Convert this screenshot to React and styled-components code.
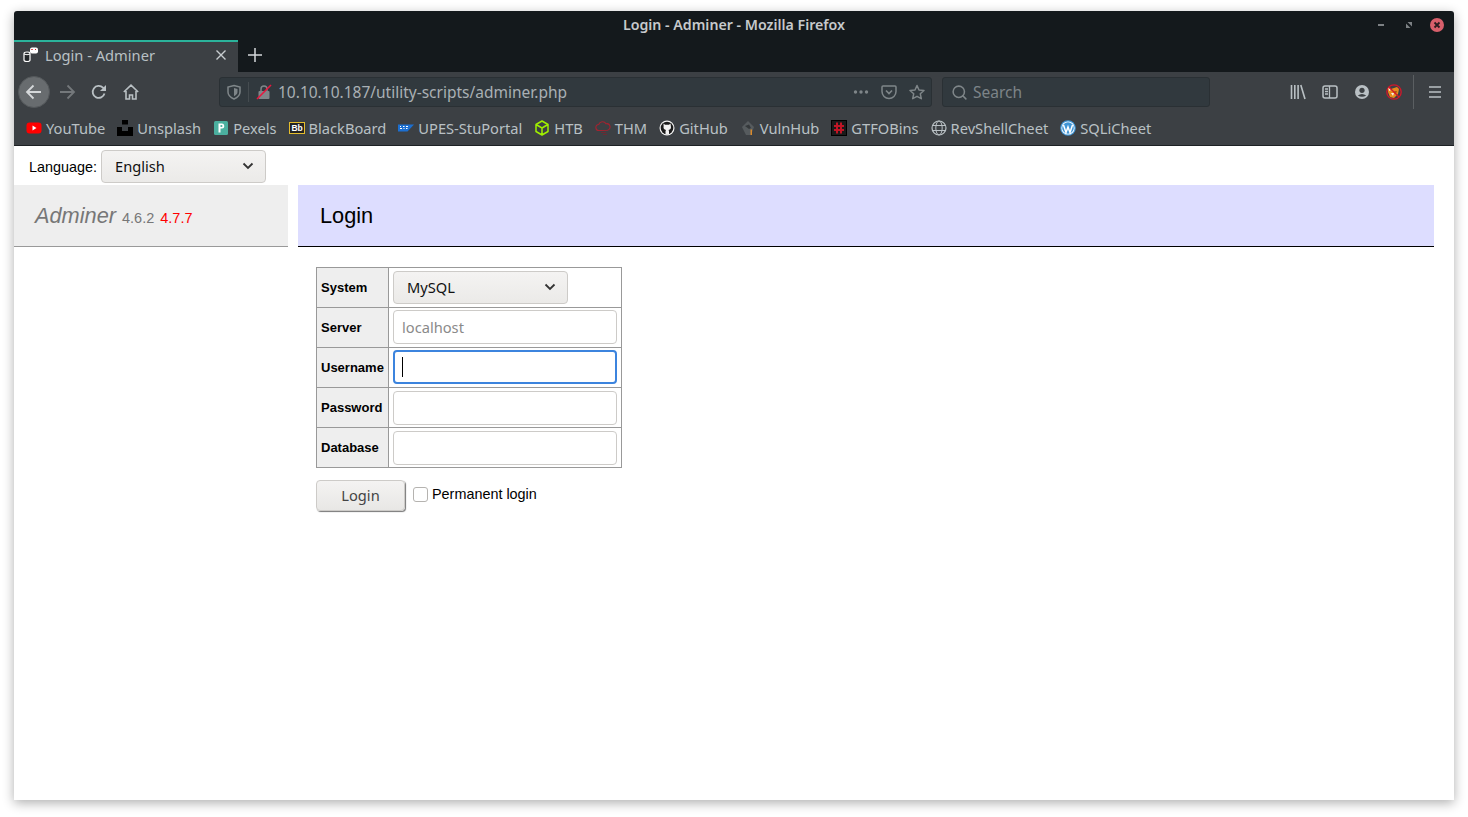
import React from "react";
import styled, { createGlobalStyle } from "styled-components";
import { Search } from "lucide-react";

const GlobalStyle = createGlobalStyle`
  html, body {
    margin: 0;
    padding: 0;
    background: #fff;
  }
`;

const Desktop = styled.div`
  width: 1468px;
  height: 817px;
  box-sizing: border-box;
  padding: 11px 14px 17px;
  overflow: hidden;
`;

const Window = styled.div`
  height: 789px;
  display: flex;
  flex-direction: column;
  background: #fff;
  border-radius: 3px 3px 0 0;
  box-shadow: 0 3px 12px rgba(0, 0, 0, 0.32);
  font-family: "Noto Sans", sans-serif;
`;

const TitleBar = styled.div`
  height: 29px;
  flex: none;
  box-sizing: border-box;
  padding: 0 0 2px;
  position: relative;
  display: flex;
  align-items: center;
  justify-content: center;
  background: #14191c;
  border-radius: 3px 3px 0 0;
  color: #c7cacc;
  font-size: 14.2px;
  font-weight: 600;
`;

const WindowButtons = styled.div`
  position: absolute;
  right: 10px;
  top: 7px;
  display: flex;
  align-items: center;
  gap: 18px;
`;

const TabStrip = styled.div`
  height: 32px;
  flex: none;
  display: flex;
  background: #14191c;
`;

const Tab = styled.div`
  width: 224px;
  box-sizing: border-box;
  display: flex;
  align-items: center;
  padding: 0 11px 4px 9px;
  gap: 6px;
  background: #3c4044;
  border-top: 2px solid #2bb39b;
  color: #b9c0c4;
  font-size: 14.67px;
`;

const TabTitle = styled.span`
  flex: 1;
`;

const NewTab = styled.div`
  width: 34px;
  padding-bottom: 2px;
  display: flex;
  align-items: center;
  justify-content: center;
`;

const NavBar = styled.div`
  height: 40px;
  flex: none;
  box-sizing: border-box;
  display: flex;
  align-items: center;
  padding: 0 3px 0 4px;
  background: #3c4044;
`;

const BackButton = styled.div`
  width: 32px;
  height: 32px;
  margin-right: 1px;
  box-sizing: border-box;
  border-radius: 50%;
  display: flex;
  align-items: center;
  justify-content: center;
  background: #686c6f;
  border: 1px solid #54585b;
`;

const NavIcon = styled.div`
  width: 32px;
  height: 32px;
  display: flex;
  align-items: center;
  justify-content: center;
`;

const UrlBar = styled.div`
  width: 713px;
  height: 30px;
  margin-left: 72px;
  box-sizing: border-box;
  display: flex;
  align-items: center;
  padding: 0 6px 0 6px;
  background: #31393e;
  border: 1px solid #2a3034;
  border-radius: 3px;
  color: #a9b0b4;
  font-size: 15.5px;
`;

const UrlText = styled.span`
  flex: 1;
  margin-left: 6px;
  white-space: nowrap;
`;

const UrlDivider = styled.span`
  width: 1px;
  height: 20px;
  margin: 0 7px 0 6px;
  background: #454c50;
`;

const UrlAction = styled.span`
  display: flex;
  margin-left: ${props => props.gap || 0}px;
`;

const SearchBar = styled.div`
  width: 268px;
  height: 30px;
  margin-left: 10px;
  box-sizing: border-box;
  display: flex;
  align-items: center;
  gap: 5px;
  padding: 0 8px;
  background: #31393e;
  border: 1px solid #2a3034;
  border-radius: 3px;
  color: #7d8488;
  font-size: 15.5px;
`;

const ToolIcons = styled.div`
  margin-left: auto;
  display: flex;
  align-items: center;
`;

const ToolIcon = styled.div`
  width: 32px;
  height: 32px;
  display: flex;
  align-items: center;
  justify-content: center;
`;

const ToolDivider = styled.div`
  width: 1px;
  height: 34px;
  margin: 0 5px 0 3px;
  background: #5b5f62;
`;

const BookmarksBar = styled.div`
  height: 34px;
  flex: none;
  box-sizing: border-box;
  display: flex;
  align-items: center;
  gap: 12px;
  padding: 0 0 2px 12px;
  background: #3c4044;
  border-bottom: 1px solid #1d2124;
`;

const Bookmark = styled.div`
  display: flex;
  align-items: center;
  gap: 4px;
  color: #b9c0c4;
  font-size: 14.67px;
  white-space: nowrap;
`;

const Page = styled.div`
  flex: 1;
  font-family: "Liberation Sans", Arial, sans-serif;
  font-size: 14.4px;
  color: #000;
`;

const LanguageRow = styled.div`
  height: 39px;
  box-sizing: border-box;
  display: flex;
  align-items: center;
  gap: 4px;
  padding: 4px 0 2px 15px;
`;

const SelectWrap = styled.div`
  position: relative;
  width: ${props => props.width}px;
  height: 33px;
`;

const Select = styled.select`
  width: 100%;
  height: 100%;
  box-sizing: border-box;
  appearance: none;
  padding: 0 0 2px 13px;
  background: linear-gradient(#f4f3f2, #ebeae8);
  border: 1px solid #cdcbc8;
  border-radius: 4px;
  color: #111;
  font-family: "Noto Sans", sans-serif;
  font-size: 14.67px;
`;

const Chevron = styled.svg`
  position: absolute;
  right: 12px;
  top: 12px;
  pointer-events: none;
`;

const Columns = styled.div`
  display: flex;
  gap: 10px;
  padding-right: 20px;
`;

const Sidebar = styled.div`
  width: 274px;
  height: 62px;
  box-sizing: border-box;
  flex: none;
  display: flex;
  align-items: baseline;
  gap: 6px;
  padding: 18px 0 0 21px;
  background: #eee;
  border-bottom: 1px solid #999;
`;

const Brand = styled.span`
  color: #777;
  font-size: 21.75px;
  font-style: italic;
`;

const Version = styled.span`
  color: ${props => (props.outdated ? "#f00" : "#777")};
  font-size: 14.5px;
`;

const Main = styled.div`
  flex: 1;
`;

const Heading = styled.h2`
  height: 62px;
  box-sizing: border-box;
  margin: 0;
  padding: 0 0 0 22px;
  display: flex;
  align-items: center;
  background: #ddf;
  border-bottom: 1px solid #000;
  font-size: 21.75px;
  font-weight: 400;
`;

const LoginForm = styled.form`
  margin: 20px 0 0 18px;
`;

const Table = styled.table`
  border-collapse: collapse;
  border: 1px solid #999;
  width: 306px;
  table-layout: fixed;
`;

const LabelCell = styled.th`
  width: 72px;
  height: 40px;
  box-sizing: border-box;
  padding: 0 0 0 4px;
  border: 1px solid #999;
  background: #eee;
  text-align: left;
  font-size: 13px;
  font-weight: 700;
`;

const FieldCell = styled.td`
  padding: 0 4px;
  border: 1px solid #999;
`;

const FieldWrap = styled.div`
  position: relative;
  height: 34px;
  margin-bottom: ${props => (props.low ? 0 : 2)}px;
`;

const Field = styled.input`
  width: 100%;
  height: 100%;
  box-sizing: border-box;
  padding: 0 8px;
  background: #fff;
  border: ${props => (props.focused ? "2px solid #3c84de" : "1px solid #cdcbc8")};
  border-radius: 4px;
  outline: none;
  caret-color: transparent;
  font-family: "Noto Sans", sans-serif;
  font-size: 14.67px;
  &::placeholder {
    color: #8a8a8a;
    opacity: 1;
  }
`;

const Caret = styled.span`
  position: absolute;
  left: 9px;
  top: 7px;
  width: 1px;
  height: 20px;
  background: #000;
`;

const FormFooter = styled.div`
  display: flex;
  align-items: flex-start;
  margin-top: 12px;
`;

const LoginButton = styled.button`
  width: 89px;
  height: 31px;
  padding: 0 0 1px;
  background: linear-gradient(#f4f3f2, #e8e7e5);
  border: 1px solid #cdcbc8;
  border-radius: 4px;
  box-shadow: 1px 1px 1px #777;
  color: #444;
  font-family: "Noto Sans", sans-serif;
  font-size: 14.67px;
`;

const PermanentLabel = styled.label`
  display: flex;
  align-items: center;
  gap: 4px;
  margin: 6px 0 0 8px;
  line-height: 17px;
`;

const Checkbox = styled.span`
  width: 15px;
  height: 15px;
  box-sizing: border-box;
  background: #fff;
  border: 1px solid #b5b3b0;
  border-radius: 3px;
`;

const BadgeText = styled.text`
  font-family: "Liberation Sans", Arial, sans-serif;
  font-size: 8.5px;
  font-weight: 700;
  fill: #fff;
`;

const IconSvg = ({ size = 16, children }) => (
  <svg width={size} height={size} viewBox="0 0 16 16" fill="none">
    {children}
  </svg>
);

const STROKE = "#b9c0c4";
const DIM = "#7f8689";

const BOOKMARKS = [
  {
    name: "YouTube",
    icon: (
      <>
        <rect x="0.5" y="2.5" width="15" height="11" rx="3" fill="#f00" />
        <path d="M6.5 5.5 10.5 8l-4 2.5z" fill="#fff" />
      </>
    ),
  },
  {
    name: "Unsplash",
    icon: <path d="M5 0h6v4.5H5zM0 7h5v4h6V7h5v9H0z" fill="#000" />,
  },
  {
    name: "Pexels",
    icon: (
      <>
        <rect x="1" y="1" width="14" height="14" rx="1.5" fill="#4baf9f" />
        <path d="M5.5 3.5h3a2.5 2.5 0 0 1 .5 5H7.5v4H5.5z" fill="#fff" />
        <path d="M7.5 5v2h1a1 1 0 0 0 0-2z" fill="#4baf9f" />
      </>
    ),
  },
  {
    name: "BlackBoard",
    icon: (
      <>
        <rect x="0.5" y="2.5" width="15" height="11" fill="#222" stroke="#e5bd2c" />
        <BadgeText x="2.4" y="11">Bb</BadgeText>
      </>
    ),
  },
  {
    name: "UPES-StuPortal",
    icon: (
      <>
        <path d="M0 4.500h16L9.500 11.500H0z" fill="#1c6fd0" />
        <path d="M2 6.500h1M5 6.500h1.500M8 6.500h2M2 8.500h2M5.500 8.500h1M8 8.500h1.500" stroke="#fff" strokeWidth="1.200" />
      </>
    ),
  },
  {
    name: "HTB",
    icon: (
      <path
        d="M8 1 14 4.500v7L8 15l-6-3.500v-7zM2 4.500 8 8l6-3.500M8 8v7"
        stroke="#9fef00"
        strokeWidth="1.500"
        strokeLinejoin="round"
      />
    ),
  },
  {
    name: "THM",
    icon: (
      <>
        <path
          d="M4 10.500a3 3 0 0 1-.3-6A4 4 0 0 1 11 3.800a3.300 3.300 0 0 1 1.500 6.500z"
          stroke="#a32330"
          strokeWidth="1.100"
        />
        <path d="M6 12.500h5M8 14.500h4" stroke="#6c2a32" />
      </>
    ),
  },
  {
    name: "GitHub",
    icon: (
      <>
        <circle cx="8" cy="8" r="7.500" fill="#f2f2f2" />
        <circle cx="8" cy="8" r="6.300" fill="#1b1b1b" />
        <path d="M4.500 3.500 6 4.800h4l1.500-1.300.4 3q.6 2.700-2.400 3.500.5.500.5 1.500v3H6.500v-3q0-1 .5-1.500-3-.8-2.400-3.500z" fill="#f2f2f2" />
      </>
    ),
  },
  {
    name: "VulnHub",
    icon: (
      <>
        <path d="M8 1 14 7l-3 8H6L2 7z" fill="#565b5e" />
        <path d="M5 6l4-1.500L11 8l-2 1z" fill="#34383b" />
        <path d="M10.500 9.500h1.500V15h-1.500z" fill="#d98a2b" />
      </>
    ),
  },
  {
    name: "GTFOBins",
    icon: (
      <>
        <rect x="0.5" y="0.500" width="15" height="15" fill="#1a1a1a" stroke="#000" />
        <path d="M6 2.500v11M10 2.500v11M3 6h10M3 10h10" stroke="#c01525" strokeWidth="2" />
      </>
    ),
  },
  {
    name: "RevShellCheet",
    icon: (
      <>
        <circle cx="8" cy="8" r="7" stroke={STROKE} strokeWidth="1.200" />
        <ellipse cx="8" cy="8" rx="3.200" ry="7" stroke={STROKE} />
        <path d="M1.500 5.500h13M1.500 10.500h13" stroke={STROKE} />
      </>
    ),
  },
  {
    name: "SQLiCheet",
    icon: (
      <>
        <circle cx="8" cy="8" r="7.800" fill="#3f95d6" />
        <circle cx="8" cy="8" r="6.600" fill="#fff" />
        <circle cx="8" cy="8" r="5.800" fill="#3f95d6" />
        <path d="M3.500 5 6 12.500 8 7 10 12.500 12.500 5" stroke="#fff" strokeWidth="1.500" />
      </>
    ),
  },
];

const LOGIN_FIELDS = [
  { label: "Server", placeholder: "localhost" },
  { label: "Username", focused: true },
  { label: "Password", low: true },
  { label: "Database", low: true },
];

const SelectBox = ({ width, value }) => (
  <SelectWrap width={width}>
    <Select defaultValue={value}>
      <option>{value}</option>
    </Select>
    <Chevron width="12" height="8" viewBox="0 0 12 8" fill="none">
      <path d="M1.500 1.500 6 6l4.500-4.500" stroke="#333" strokeWidth="1.800" />
    </Chevron>
  </SelectWrap>
);

const App = () => (
  <Desktop>
    <GlobalStyle />
    <Window>
      <TitleBar>
        Login - Adminer - Mozilla Firefox
        <WindowButtons>
          <svg width="10" height="14" viewBox="0 0 10 14">
            <rect y="6" width="6" height="2" fill="#7d8184" />
          </svg>
          <svg width="6" height="14" viewBox="0 0 6 14">
            <path d="M0 10V5.500L4.500 10zM1.500 4H6v4.500z" fill="#7d8184" />
          </svg>
          <svg width="14" height="14" viewBox="0 0 14 14">
            <circle cx="7" cy="7" r="7" fill="#d85f6b" />
            <path d="M4.500 4.500l5 5M9.500 4.500l-5 5" stroke="#2a1c1f" strokeWidth="1.800" />
          </svg>
        </WindowButtons>
      </TitleBar>

      <TabStrip>
        <Tab>
          <IconSvg>
            <path d="M1 6.500q0-1.500 3-1.500t3 1.500V13q0 1.500-3 1.500T1 13z" fill="#23272a" stroke="#fff" strokeWidth="1.200" />
            <path d="M1 7q3 1.500 6 0" stroke="#fff" />
            <rect x="7" y="0.500" width="8" height="6" rx="2" fill="#fff" />
            <path d="M8.500 2l1 1M9.500 2l-1 1M12 2l1 1M13 2l-1 1" stroke="#d3222a" />
          </IconSvg>
          <TabTitle>Login - Adminer</TabTitle>
          <svg width="12" height="12" viewBox="0 0 12 12">
            <path d="M1.500 1.500l9 9M10.500 1.500l-9 9" stroke="#c8cdd0" strokeWidth="1.400" />
          </svg>
        </Tab>
        <NewTab>
          <svg width="14" height="14" viewBox="0 0 14 14">
            <path d="M7 0v14M0 7h14" stroke="#d5d8da" strokeWidth="1.500" />
          </svg>
        </NewTab>
      </TabStrip>

      <NavBar>
        <BackButton>
          <svg width="18" height="18" viewBox="0 0 18 18" fill="none">
            <path d="M16 9H2.500M8.500 2.500 2 9l6.500 6.500" stroke="#d5d8da" strokeWidth="1.800" />
          </svg>
        </BackButton>
        <NavIcon>
          <svg width="18" height="18" viewBox="0 0 18 18" fill="none">
            <path d="M2 9h13.500M9.500 2.500 16 9l-6.500 6.500" stroke="#74787b" strokeWidth="1.800" />
          </svg>
        </NavIcon>
        <NavIcon>
          <svg width="16" height="16" viewBox="0 0 16 16" fill="none">
            <path d="M13.500 9.500A6 6 0 1 1 12 3.700L14.500 6" stroke={STROKE} strokeWidth="1.800" />
            <path d="M15 1v6H9z" fill={STROKE} />
          </svg>
        </NavIcon>
        <NavIcon>
          <svg width="16" height="16" viewBox="0 0 16 16" fill="none">
            <path d="M.8 8 8 1.200 15.200 8M3 7v8h3.500v-4h3v4H13V7" stroke={STROKE} strokeWidth="1.600" />
          </svg>
        </NavIcon>

        <UrlBar>
          <IconSvg>
            <path d="M8 1.500 14 3v5q0 4.500-6 7-6-2.500-6-7V3z" stroke={DIM} strokeWidth="1.500" />
            <path d="M8 4 11.500 5v3q0 2.500-3.500 4.200z" fill={DIM} />
          </IconSvg>
          <UrlDivider />
          <IconSvg>
            <path d="M5 7V5a3 3 0 0 1 6 0v2" stroke={DIM} strokeWidth="1.500" />
            <rect x="2.500" y="7" width="11" height="8" rx="1" fill={DIM} />
            <path d="M1 15 15 1" stroke="#e8173f" strokeWidth="1.600" />
          </IconSvg>
          <UrlText>10.10.10.187/utility-scripts/adminer.php</UrlText>
          <UrlAction>
            <svg width="16" height="16" viewBox="0 0 16 16">
              <circle cx="2.500" cy="8" r="1.700" fill={DIM} />
              <circle cx="8" cy="8" r="1.700" fill={DIM} />
              <circle cx="13.500" cy="8" r="1.700" fill={DIM} />
            </svg>
          </UrlAction>
          <UrlAction gap={12}>
            <IconSvg>
              <path d="M2 2h12q1 0 1 1v4.500a7 7 0 0 1-14 0V3q0-1 1-1z" stroke={DIM} strokeWidth="1.500" />
              <path d="M5 6.500 8 9.500l3-3" stroke={DIM} strokeWidth="1.700" />
            </IconSvg>
          </UrlAction>
          <UrlAction gap={12}>
            <IconSvg>
              <path d="M8 1.500 10 6l5 .5-3.700 3.300 1 4.900L8 12.300l-4.300 2.400 1-4.900L1 6.500 6 6z" stroke={DIM} strokeWidth="1.500" strokeLinejoin="round" />
            </IconSvg>
          </UrlAction>
        </UrlBar>

        <SearchBar>
          <Search size={17} color={DIM} strokeWidth={2.2} />
          Search
        </SearchBar>

        <ToolIcons>
          <ToolIcon>
            <IconSvg>
              <path d="M1.500 1v14M4.800 1v14M8.100 1v14M10.800 1 15 15" stroke={STROKE} strokeWidth="1.600" />
            </IconSvg>
          </ToolIcon>
          <ToolIcon>
            <IconSvg>
              <rect x="1" y="2" width="14" height="12" rx="2" stroke={STROKE} strokeWidth="1.500" />
              <path d="M7.500 2v12M3 5h3M3 7.500h3M3 10h3" stroke={STROKE} strokeWidth="1.300" />
            </IconSvg>
          </ToolIcon>
          <ToolIcon>
            <IconSvg>
              <circle cx="8" cy="8" r="7" fill={STROKE} />
              <circle cx="8" cy="6.300" r="2.600" fill="#3c4044" />
              <path d="M3.800 11.500q4.200-3 8.400 0-4.200 2.500-8.400 0z" fill="#3c4044" />
            </IconSvg>
          </ToolIcon>
          <ToolIcon>
            <IconSvg>
              <circle cx="8" cy="8" r="7.200" fill="#3c4044" stroke="#d3162a" strokeWidth="1.300" />
              <path d="M2 4l3 1 3-1 3-1 2 2-1 5-4 4-4-1-2-5z" fill="#e8891c" />
              <path d="M2.500 3.500 5 6 3 7zM5 9h3l-1 3z" fill="#f1efeb" />
              <path d="M8 7h3l-1 3z" fill="#a85a12" />
              <path d="M2.800 3 13 13" stroke="#d3162a" strokeWidth="1.300" />
            </IconSvg>
          </ToolIcon>
          <ToolDivider />
          <ToolIcon>
            <svg width="12" height="12" viewBox="0 0 12 12">
              <path d="M0 1h12M0 6h12M0 11h12" stroke={STROKE} strokeWidth="1.600" />
            </svg>
          </ToolIcon>
        </ToolIcons>
      </NavBar>

      <BookmarksBar>
        {BOOKMARKS.map(bookmark => (
          <Bookmark key={bookmark.name}>
            <IconSvg>{bookmark.icon}</IconSvg>
            {bookmark.name}
          </Bookmark>
        ))}
      </BookmarksBar>

      <Page>
        <LanguageRow>
          Language:
          <SelectBox width={165} value="English" />
        </LanguageRow>
        <Columns>
          <Sidebar>
            <Brand>Adminer</Brand>
            <Version>4.6.2</Version>
            <Version outdated>4.7.7</Version>
          </Sidebar>
          <Main>
            <Heading>Login</Heading>
            <LoginForm onSubmit={e => e.preventDefault()}>
              <Table>
                <tbody>
                  <tr>
                    <LabelCell>System</LabelCell>
                    <FieldCell>
                      <SelectBox width={175} value="MySQL" />
                    </FieldCell>
                  </tr>
                  {LOGIN_FIELDS.map(field => (
                    <tr key={field.label}>
                      <LabelCell>{field.label}</LabelCell>
                      <FieldCell>
                        <FieldWrap low={field.low}>
                          <Field
                            readOnly
                            placeholder={field.placeholder}
                            focused={field.focused}
                          />
                          {field.focused && <Caret />}
                        </FieldWrap>
                      </FieldCell>
                    </tr>
                  ))}
                </tbody>
              </Table>
              <FormFooter>
                <LoginButton type="button">Login</LoginButton>
                <PermanentLabel>
                  <Checkbox />
                  Permanent login
                </PermanentLabel>
              </FormFooter>
            </LoginForm>
          </Main>
        </Columns>
      </Page>
    </Window>
  </Desktop>
);

export default App;
